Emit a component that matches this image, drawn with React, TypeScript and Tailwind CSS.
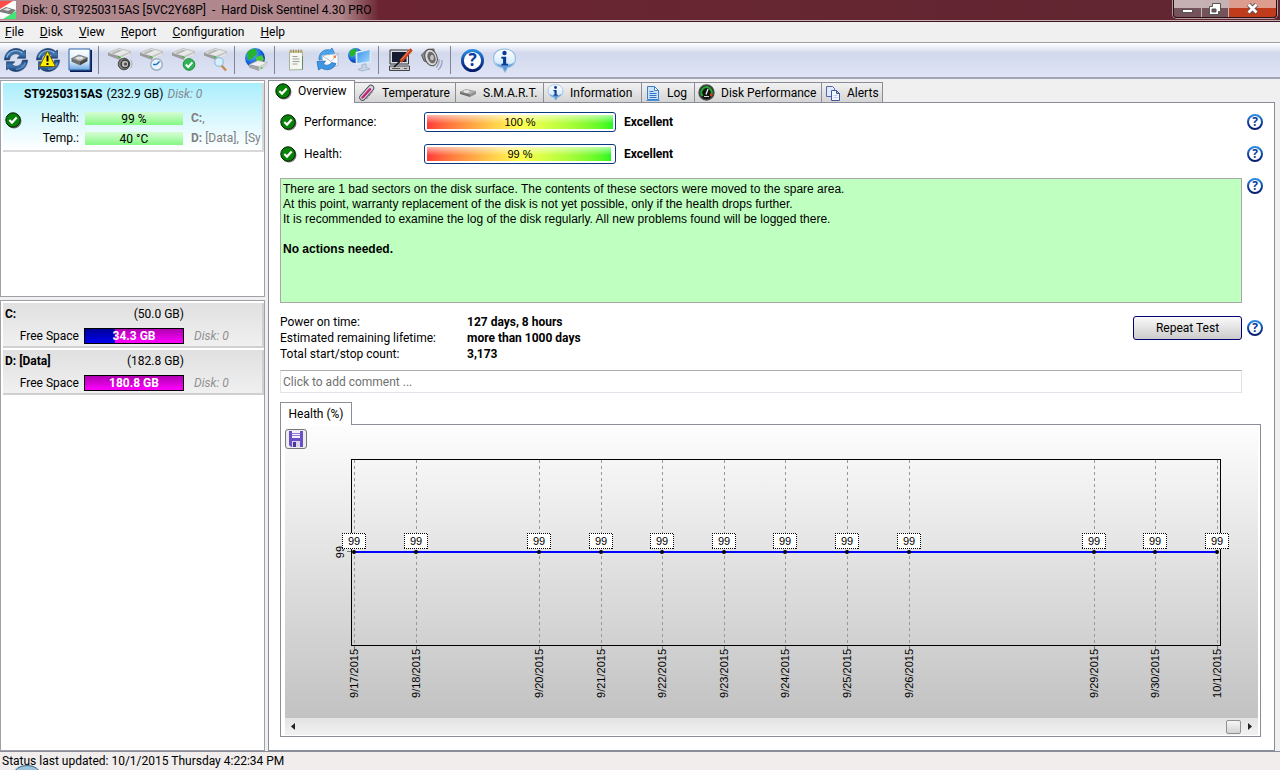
import { useState, type ReactNode } from 'react'

const MENU = ['File', 'Disk', 'View', 'Report', 'Configuration', 'Help']

const POINTS = [
  { x: 69, date: '9/17/2015' },
  { x: 131, date: '9/18/2015' },
  { x: 254, date: '9/20/2015' },
  { x: 316, date: '9/21/2015' },
  { x: 377, date: '9/22/2015' },
  { x: 439, date: '9/23/2015' },
  { x: 500, date: '9/24/2015' },
  { x: 562, date: '9/25/2015' },
  { x: 624, date: '9/26/2015' },
  { x: 809, date: '9/29/2015' },
  { x: 870, date: '9/30/2015' },
  { x: 932, date: '10/1/2015' },
]

// gradients shared by all the icons
function IconDefs() {
  return (
    <svg width="0" height="0" className="absolute" aria-hidden="true">
      <defs>
        <linearGradient id="ring" x1="0" y1="0" x2="0" y2="1">
          <stop offset="0" stopColor="#2b8be0" />
          <stop offset="0.5" stopColor="#1149a8" />
          <stop offset="1" stopColor="#061c6e" />
        </linearGradient>
        <linearGradient id="arrowBlue" x1="0" y1="0" x2="0" y2="1">
          <stop offset="0" stopColor="#1d4277" />
          <stop offset="0.5" stopColor="#3f78b4" />
          <stop offset="1" stopColor="#173a70" />
        </linearGradient>
        <linearGradient id="bubble" x1="0" y1="0" x2="0" y2="1">
          <stop offset="0" stopColor="#ffffff" />
          <stop offset="0.6" stopColor="#d9ecfb" />
          <stop offset="1" stopColor="#6ba6dc" />
        </linearGradient>
        <radialGradient id="globe" cx="0.35" cy="0.3" r="0.8">
          <stop offset="0" stopColor="#6cc4ff" />
          <stop offset="0.6" stopColor="#1261d8" />
          <stop offset="1" stopColor="#04287c" />
        </radialGradient>
        <linearGradient id="screen" x1="0" y1="0" x2="1" y2="1">
          <stop offset="0" stopColor="#2f8fee" />
          <stop offset="1" stopColor="#a9dcff" />
        </linearGradient>
      </defs>
    </svg>
  )
}

function HelpIcon({ size = 16 }: { size?: number }) {
  return (
    <svg width={size} height={size} viewBox="0 0 16 16" aria-hidden="true">
      <circle cx="8" cy="8" r="7" fill="#fff" stroke="url(#ring)" strokeWidth="2" />
      <text x="8" y="12" textAnchor="middle" fontSize="12" fontWeight="bold" fill="#0d3b9c" fontFamily="Open Sans, sans-serif">?</text>
    </svg>
  )
}

function CheckIcon() {
  return (
    <svg width="17" height="17" viewBox="0 0 17 17" aria-hidden="true">
      <circle cx="9" cy="9" r="7.5" fill="#777" />
      <circle cx="8" cy="8" r="7.2" fill="#068206" stroke="#001c00" />
      <path d="M4.300 8l2.700 2.600 4.700-5" fill="none" stroke="#fff" strokeWidth="2.200" />
    </svg>
  )
}

function InfoIcon({ size = 24 }: { size?: number }) {
  return (
    <svg width={size} height={size} viewBox="0 0 24 24" aria-hidden="true">
      <path d="M12 1c6.500 0 10.500 3.800 10.500 9 0 4.600-3 7.700-7.500 8.700L12.500 23 10 18.900C4.800 18 1.500 14.700 1.500 10 1.500 4.800 5.500 1 12 1z" fill="url(#bubble)" stroke="#8db8e0" />
      <path d="M3 13.500c3.500 4.300 14.500 4.300 18 0-1.200 3-3.800 4.600-6.500 5L12.500 22 10.500 18.500c-3.300-.5-6-2-7.500-5z" fill="#4a8fd2" opacity="0.800" />
      <circle cx="12" cy="4.800" r="2.100" fill="#0b3c94" />
      <path d="M9 8.500h4.600v6.500H15.500v1.700H9V15h1.600v-4.800H9z" fill="#0b3c94" />
    </svg>
  )
}

function SyncIcon({ warn = false }: { warn?: boolean }) {
  return (
    <svg width="26" height="26" viewBox="0 0 26 26" aria-hidden="true">
      <path d="M1.500 13C1.500 6.500 6.500 1.500 13 1.500c3 0 5.600 1 7.600 2.900L22.500 3v8.200h-8.300l2.700-2.600C15.800 7.400 14.500 6.800 13 6.800c-3.400 0-6 2.500-6.400 6z" fill="url(#arrowBlue)" stroke="#16325f" strokeWidth="0.600" />
      <path d="M24.500 13C24.500 19.500 19.500 24.500 13 24.500c-3 0-5.600-1-7.600-2.900L3.500 23v-8.200h8.300l-2.700 2.600c1.100 1.200 2.400 1.800 3.900 1.800 3.400 0 6-2.500 6.400-6z" fill="url(#arrowBlue)" stroke="#16325f" strokeWidth="0.600" />
      <path d="M3.800 10.500C5 6.500 8.700 3.600 13 3.600c2.500 0 4.700.9 6.500 2.500" fill="none" stroke="#8fb8de" strokeWidth="1.400" />
      <path d="M22.200 15.500c-1.200 4-4.900 6.900-9.200 6.900" fill="none" stroke="#5f93c8" strokeWidth="1.200" />
      {warn && (
        <>
          <path d="M12.500 4L20.500 19.500H4.500z" fill="#ffee00" stroke="#6d5f00" strokeWidth="1" strokeLinejoin="round" />
          <path d="M12.500 8.500v6M12.500 16v2" stroke="#000" strokeWidth="2" />
        </>
      )}
    </svg>
  )
}

function DriveBody() {
  return (
    <>
      <path d="M1 6L12 1.500 24 4.500 13 9.500z" fill="#e8e8e8" stroke="#a5a5a5" strokeWidth="0.600" />
      <path d="M4 6l8-3.300 3 .8-8 3.500z" fill="#b4b4b4" />
      <path d="M1 6l12 3.500V13L1 8.500z" fill="#9b9b9b" />
      <path d="M13 9.500l11-5v2.800L13 13z" fill="#c8c8c8" />
      <path d="M14 11.300l9-4.300" stroke="#fff" strokeWidth="0.800" />
      <path d="M11 9.500l3 1" stroke="#27c427" strokeWidth="1.200" />
    </>
  )
}

function DriveIcon({ kind }: { kind: 'sound' | 'clock' | 'check' | 'search' }) {
  return (
    <svg width="26" height="26" viewBox="0 0 26 26" aria-hidden="true">
      <DriveBody />
      {kind === 'sound' && (
        <>
          <circle cx="17" cy="17" r="5.800" fill="#7d7d7d" stroke="#4a4a4a" />
          <circle cx="18" cy="17" r="3.800" fill="#b9b9b9" stroke="#2e2e2e" strokeWidth="1.200" />
          <circle cx="18.500" cy="17" r="1.500" fill="#4a4a4a" />
          <path d="M23.500 12.500c2 2.500 2 6.500 0 9" fill="none" stroke="#aab" />
        </>
      )}
      {kind === 'clock' && (
        <>
          <circle cx="17.500" cy="17.500" r="5.800" fill="#e9f3fb" stroke="#9aaebf" strokeWidth="1.400" />
          <path d="M17.500 17.500l3-3M17.500 17.500h-3.500" stroke="#1a6fc0" strokeWidth="1.400" />
        </>
      )}
      {kind === 'check' && (
        <>
          <circle cx="18" cy="17.500" r="5.800" fill="#2fb457" stroke="#168a3a" />
          <path d="M14.800 17.500l2.400 2.500 4.200-4.600" fill="none" stroke="#fff" strokeWidth="1.900" />
        </>
      )}
      {kind === 'search' && (
        <>
          <path d="M18.500 18.500l4.500 5" stroke="#c98a4a" strokeWidth="2.400" />
          <circle cx="16" cy="15" r="4.300" fill="#d7effc" stroke="#8fbfe0" strokeWidth="1.200" />
        </>
      )}
    </svg>
  )
}

function DiskBoxIcon() {
  return (
    <svg width="24" height="24" viewBox="0 0 24 24" aria-hidden="true">
      <path d="M2 2h22v22H2z" fill="#0a1c52" />
      <path d="M1 1h21v21H1z" fill="url(#bubble)" stroke="#2c62ae" />
      <path d="M3.500 10.500L11 7l8.500 2.800-7.500 4z" fill="#a5a5a5" stroke="#555" strokeWidth="0.600" />
      <path d="M3.500 10.500l8.500 3.300v3.400l-8.500-3.500z" fill="#6c6c6c" />
      <path d="M12 13.800l7.500-4v3.400l-7.500 4z" fill="#484848" />
      <ellipse cx="11.500" cy="10.200" rx="3.500" ry="1.400" fill="#e4e4e4" />
    </svg>
  )
}

function Globe({ cx, cy, r }: { cx: number; cy: number; r: number }) {
  return (
    <>
      <circle cx={cx} cy={cy} r={r} fill="url(#globe)" />
      <path
        d={`M${cx - r * 0.8} ${cy - r * 0.5}q${r * 0.4} ${-r * 0.5} ${r * 0.9} ${-r * 0.4}l${r * 0.1} ${r * 0.5}l${-r * 0.5} ${r * 0.5}l${-r * 0.4} ${r * 0.1}z`}
        fill="#27b32b"
      />
      <path
        d={`M${cx + r * 0.1} ${cy - r * 0.1}l${r * 0.6} ${-r * 0.2}l${r * 0.2} ${r * 0.4}l${-r * 0.4} ${r * 0.7}l${-r * 0.4} ${-r * 0.3}z`}
        fill="#49c83c"
      />
    </>
  )
}

function GlobeDriveIcon() {
  return (
    <svg width="26" height="26" viewBox="0 0 26 26" aria-hidden="true">
      <Globe cx={12} cy={11} r={10} />
      <path d="M6 17.500l9-4 9.500 2-8.500 4.500z" fill="#f0f0f0" stroke="#9b9b9b" strokeWidth="0.600" />
      <path d="M6 17.500l10 2.500v4L6 20.500z" fill="#a4a4a4" />
      <path d="M16 20l8.500-4.500v3.500L16 24z" fill="#d4d4d4" />
      <path d="M17.500 21.500l2-1" stroke="#27c427" strokeWidth="1.200" />
    </svg>
  )
}

function NotepadIcon() {
  return (
    <svg width="24" height="24" viewBox="0 0 24 24" aria-hidden="true">
      <path d="M5.500 3.500h13v18l-13 .5z" fill="#f6f7f0" stroke="#a8b0a4" />
      <path d="M5 2.500h14v2H5z" fill="#c9bf86" />
      <path d="M7 1.500v3.500M9.500 1.500v3.500M12 1.500v3.500M14.500 1.500v3.500M17 1.500v3.500" stroke="#857a48" strokeWidth="0.800" />
      <path d="M8.500 8.500h5M8.500 11h7M8.500 13.500h7M8.500 16h5" stroke="#98a0a0" />
      <path d="M18.500 8v13.500" stroke="#5c8a5a" />
    </svg>
  )
}

function MailSyncIcon() {
  return (
    <svg width="26" height="26" viewBox="0 0 26 26" aria-hidden="true">
      <path d="M4 13C3.500 6 9 1.500 15 3l2-2 3.500 7.500-8.500 1 2-2.500C10.500 6.500 8 9 8 12z" fill="#4aa5ec" stroke="#2272bd" strokeWidth="0.700" />
      <path d="M7 8.500l16-2v12L8 21z" fill="#fbfcff" stroke="#a7b4c8" strokeWidth="0.800" />
      <path d="M7 8.500l9 6 7-8" fill="none" stroke="#a7b4c8" strokeWidth="0.800" />
      <path d="M18.500 8.500h2.500v2.500h-2.500z" fill="#e6814c" />
      <path d="M2 14.500l8.500-.5-2 3c2.500 2 6.500 1.500 8-1.500l4.500 1c-2 6-9.500 8-14.500 4.500L3.500 23z" fill="#3f97e4" stroke="#1d69b4" strokeWidth="0.700" />
    </svg>
  )
}

function NetworkIcon() {
  return (
    <svg width="26" height="26" viewBox="0 0 26 26" aria-hidden="true">
      <Globe cx={8.500} cy={8.500} r={7.500} />
      <path d="M9.500 5.500l14-3.500v13l-14 2z" fill="url(#screen)" stroke="#dfeaf4" strokeWidth="1.600" />
      <path d="M15 17.500l4-.8v3.300l4 2-8 2-4-1.500 4-2z" fill="#c6d3e2" stroke="#8ca3bc" strokeWidth="0.600" />
    </svg>
  )
}

function PcToolIcon() {
  return (
    <svg width="26" height="26" viewBox="0 0 26 26" aria-hidden="true">
      <path d="M3 3h18.500v14H3z" fill="#dcdce4" stroke="#333" />
      <path d="M5 5h14.500v10H5z" fill="#141c34" />
      <path d="M2.500 19h20v4.500h-20z" fill="#c9c9c9" stroke="#444" />
      <path d="M5 21.500h8M17 21.500h3" stroke="#555" />
      <path d="M7 20l8.500-8" stroke="#111" strokeWidth="1.600" />
      <path d="M14.500 13.500L23.500 3.500" stroke="#c6431e" strokeWidth="3.600" strokeLinecap="round" />
      <path d="M14.500 12.500L22.500 3.500" stroke="#f5986a" strokeWidth="1" />
    </svg>
  )
}

function SpeakerIcon() {
  return (
    <svg width="26" height="26" viewBox="0 0 26 26" aria-hidden="true">
      <path d="M2.500 8L8 2.500l7-.5v15.500L5 14z" fill="#8b8b8b" stroke="#5d5d5d" />
      <ellipse cx="12" cy="10.500" rx="6" ry="8.500" transform="rotate(-20 12 10.500)" fill="#dadada" stroke="#4d4d4d" />
      <ellipse cx="12.500" cy="10.500" rx="3.800" ry="6" transform="rotate(-20 12.500 10.500)" fill="#6b6b6b" />
      <ellipse cx="13" cy="10.500" rx="1.800" ry="2.800" fill="#c6c6c6" />
      <path d="M20 12c.5 3.500-.5 6-3 8.500M23 13c.3 4-1 7.500-4 10" fill="none" stroke="#9aa2bd" strokeWidth="1.300" />
    </svg>
  )
}

function ThermoIcon() {
  return (
    <svg width="18" height="18" viewBox="0 0 18 18" className="shrink-0" aria-hidden="true">
      <path d="M4.500 13.500L13 4" stroke="#4f4f58" strokeWidth="6.500" strokeLinecap="round" />
      <path d="M4.500 13.500L13 4" stroke="#d9d3dc" strokeWidth="4.800" strokeLinecap="round" />
      <path d="M4.500 13.500L12 5.200" stroke="#c3207c" strokeWidth="2.400" strokeLinecap="round" />
      <path d="M8.500 15l6-7" stroke="#5e5e66" strokeDasharray="1 1" />
    </svg>
  )
}

function SmallDriveIcon() {
  return (
    <svg width="18" height="14" viewBox="0 0 18 14" aria-hidden="true">
      <path d="M1 6l6-2.500 10 2-6 3z" fill="#b5b5b5" stroke="#777" strokeWidth="0.500" />
      <path d="M1 6l10 2.500V11L1 8z" fill="#6f6f6f" />
      <path d="M11 8.500l6-3v2.500l-6 3z" fill="#8e8e8e" />
      <ellipse cx="7.500" cy="5.500" rx="3" ry="1.200" fill="#ececec" />
    </svg>
  )
}

function LogIcon() {
  return (
    <svg width="16" height="16" viewBox="0 0 16 16" aria-hidden="true">
      <path d="M2.500 1.500h7l4 4v9h-11z" fill="#c9e3fb" stroke="#3c7fcb" />
      <path d="M9.500 1.500v4h4z" fill="#fff" stroke="#3c7fcb" />
      <path d="M4.500 6.500h4M4.500 8.500h7M4.500 10.500h7M4.500 12.500h7" stroke="#2f74c4" />
      <path d="M1.500 15.500h13" stroke="#4a8fd8" />
    </svg>
  )
}

function GaugeIcon() {
  return (
    <svg width="17" height="17" viewBox="0 0 17 17" aria-hidden="true">
      <circle cx="8.500" cy="8.500" r="7.500" fill="#0f1710" stroke="#4a4a4a" strokeWidth="1.400" />
      <path d="M4.500 12A5.300 5.300 0 1 1 12.500 12" fill="none" stroke="#25a832" strokeWidth="2.200" />
      <path d="M12.500 12a5.300 5.300 0 0 0 1.200-2.500" fill="none" stroke="#e03020" strokeWidth="2" />
      <path d="M8 10.500l2-5.500" stroke="#fff" strokeWidth="1.200" />
      <path d="M6 12.500h5" stroke="#d8d8d8" />
    </svg>
  )
}

function AlertsIcon() {
  return (
    <svg width="16" height="16" viewBox="0 0 16 16" aria-hidden="true">
      <path d="M1.500 1.500h6l2 2v8h-8z" fill="#dfe9fb" stroke="#5468a8" />
      <path d="M6.500 5.500h5l3 3v7h-8z" fill="#f2f7ff" stroke="#43589c" />
      <path d="M11.500 5.500v3h3z" fill="#a8c0ea" stroke="#43589c" />
      <path d="M8.500 10.500h4M8.500 12.500h4" stroke="#b4caee" />
    </svg>
  )
}

function DisketteIcon() {
  return (
    <svg width="16" height="16" viewBox="0 0 16 16" aria-hidden="true">
      <path d="M1 0h14v16H3l-2-2z" fill="#6a50c4" />
      <path d="M4 0h8v7H4z" fill="#f3f0fc" />
      <path d="M4 2.500h8M4 4.500h8" stroke="#8f7fd2" />
      <path d="M4 10h8v6H4z" fill="#d8d3ee" />
      <path d="M5 11h3v5H5z" fill="#4a34a0" />
    </svg>
  )
}

function AppIcon() {
  return (
    <svg width="16" height="18" viewBox="0 0 16 18" aria-hidden="true">
      <path d="M0 0h16v18H0z" fill="#fff" />
      <path d="M0 0h13L0 8z" fill="#ff2a2a" opacity="0.850" />
      <path d="M16 18H3l13-8z" fill="#1fe05a" opacity="0.850" />
      <path d="M0 9l6-3 10 3-5 4.500L0 11z" fill="#7b7b7b" />
      <path d="M3 8.500l4-1.500 4 1.500-3 1.500z" fill="#e0e0e0" />
    </svg>
  )
}

const TOOLBAR: { label: string; icon: ReactNode; sep?: boolean }[] = [
  { label: 'Refresh', icon: <SyncIcon /> },
  { label: 'Refresh with warning', icon: <SyncIcon warn /> },
  { label: 'Disk details', icon: <DiskBoxIcon />, sep: true },
  { label: 'Acoustic settings', icon: <DriveIcon kind="sound" /> },
  { label: 'Short self test', icon: <DriveIcon kind="clock" /> },
  { label: 'Extended self test', icon: <DriveIcon kind="check" /> },
  { label: 'Surface test', icon: <DriveIcon kind="search" />, sep: true },
  { label: 'Online disk info', icon: <GlobeDriveIcon />, sep: true },
  { label: 'Save report', icon: <NotepadIcon /> },
  { label: 'Send report', icon: <MailSyncIcon /> },
  { label: 'Network report', icon: <NetworkIcon />, sep: true },
  { label: 'Configuration', icon: <PcToolIcon /> },
  { label: 'Sound alerts', icon: <SpeakerIcon />, sep: true },
  { label: 'Help', icon: <HelpIcon size={23} /> },
  { label: 'About', icon: <InfoIcon size={25} /> },
]

const TABS: { label: string; icon: ReactNode; width: string }[] = [
  { label: 'Overview', icon: <CheckIcon />, width: 'w-[87px]' },
  { label: 'Temperature', icon: <ThermoIcon />, width: 'w-[101px]' },
  { label: 'S.M.A.R.T.', icon: <SmallDriveIcon />, width: 'w-[88px]' },
  { label: 'Information', icon: <InfoIcon size={17} />, width: 'w-[98px]' },
  { label: 'Log', icon: <LogIcon />, width: 'w-[53px]' },
  { label: 'Disk Performance', icon: <GaugeIcon />, width: 'w-[127px]' },
  { label: 'Alerts', icon: <AlertsIcon />, width: 'w-[61px]' },
]

function TitleBar() {
  return (
    <header className="flex h-[22px] items-start justify-between border-b border-[#3d1620] bg-linear-to-r from-[#8a4d58] via-[#6b2532] via-30% to-[#5f2631] shadow-[inset_0_-1px_0_#c9b0b4]">
      <div className="flex h-5 items-center gap-[6px] bg-linear-to-r from-[#b08a90] via-[#b0868c] via-90% to-transparent pr-2">
        <AppIcon />
        <h1 className="whitespace-pre">Disk: 0, ST9250315AS [5VC2Y68P]  -  Hard Disk Sentinel 4.30 PRO</h1>
      </div>
      <div className="mr-[3px] flex h-[18px] overflow-hidden rounded-b border border-t-0 border-[#2b0f16] text-white shadow-[0_0_0_1px_#b39a9e]">
        <button aria-label="Minimize" className="flex w-7 items-center justify-center border-r border-[#c9b4b8] bg-linear-to-b from-[#c5b1b4] from-45% to-[#74535a] to-50% pt-1">
          <span className="h-1 w-[11px] border border-[#555] bg-white" />
        </button>
        <button aria-label="Restore" className="flex w-[27px] items-center justify-center border-r border-[#c9b4b8] bg-linear-to-b from-[#c5b1b4] from-45% to-[#74535a] to-50%">
          <svg width="12" height="12" viewBox="0 0 12 12">
            <path d="M3.500.5h8v8h-2v3h-9v-8h3z" fill="#fff" stroke="#555" />
            <path d="M3 6h4v3H3z" fill="#74535a" stroke="#555" />
          </svg>
        </button>
        <button aria-label="Close" className="flex w-[47px] items-center justify-center bg-linear-to-b from-[#dc9c8e] from-45% to-[#c03a1c] to-50%">
          <svg width="13" height="11" viewBox="0 0 13 11">
            <path d="M2.500 1.500l8 8M10.500 1.500l-8 8" stroke="#5a4a50" strokeWidth="4.500" />
            <path d="M2.500 1.500l8 8M10.500 1.500l-8 8" stroke="#fff" strokeWidth="2.800" />
          </svg>
        </button>
      </div>
    </header>
  )
}

function DiskCard() {
  return (
    <div className="m-[2px] mr-0 h-[69px] border-r-2 border-b-2 border-[#d8d8d8] bg-linear-to-b from-[#a9eefc] to-white">
      <div className="flex h-[22px] items-center gap-1 pl-[21px] whitespace-nowrap">
        <b>ST9250315AS</b>
        <span>(232.9 GB)</span>
        <i className="text-[#808890]">Disk: 0</i>
      </div>
      <div className="grid grid-cols-[20px_56px_98px_1fr] items-center pt-[3px]">
        <div className="row-span-2 self-start pt-1 pl-[2px]"><CheckIcon /></div>
        <span className="text-right leading-5">Health:</span>
        <div className="ml-[6px] h-[13px] w-[98px] bg-linear-to-b from-[#d6fcd6] to-[#82f882] text-center leading-[15px]">99 %</div>
        <span className="pl-[14px] text-[#808080]"><b>C:</b>,</span>
        <span className="text-right leading-5">Temp.:</span>
        <div className="ml-[6px] h-[13px] w-[98px] bg-linear-to-b from-[#d6fcd6] to-[#82f882] text-center leading-[15px]">40 °C</div>
        <span className="pl-[14px] whitespace-pre text-[#808080]"><b>D:</b> [Data],  [Sy</span>
      </div>
    </div>
  )
}

function VolumeCard({ name, size, free, used }: { name: string; size: string; free: string; used: number }) {
  return (
    <div className="mb-[2px] h-[45px] border-r-2 border-b-2 border-[#d0d0d0] bg-linear-to-b from-[#e0e0e0] to-[#f0f0f0]">
      <div className="flex h-[22px] w-[181px] items-center justify-between pl-[2px]">
        <b>{name}</b>
        <span>({size})</span>
      </div>
      <div className="flex h-[21px] items-center">
        <span className="w-[76px] text-right">Free Space</span>
        <div className="relative ml-[5px] h-4 w-[100px] overflow-hidden border border-black bg-linear-to-b from-[#b000b0] to-[#ff00ff]">
          <div className="absolute inset-y-0 left-0 bg-linear-to-b from-[#000098] to-[#0000f0]" style={{ width: `${used}%` }} />
          <b className="relative block text-center leading-[15px] text-white">{free}</b>
        </div>
        <i className="ml-[10px] text-[#909090]">Disk: 0</i>
      </div>
    </div>
  )
}

function ScoreRow({ label, value }: { label: string; value: number }) {
  return (
    <div className="flex h-8 items-center">
      <CheckIcon />
      <span className="ml-[7px] w-[120px]">{label}:</span>
      <div role="progressbar" aria-label={label} aria-valuenow={value} className="relative h-5 w-48 rounded-[3px] border border-[#0a3a7c] bg-white p-[2px]">
        <div className="h-full" style={{ width: `${value}%` }}>
          <div className="relative h-full bg-linear-to-r from-[#ff3838] via-[#ffff50] to-[#20f820]">
            <div className="absolute inset-0 bg-linear-to-b from-white/60 to-transparent to-60%" />
          </div>
        </div>
        <span className="absolute inset-0 text-center font-['Liberation_Sans',sans-serif] text-[11px] leading-[18px]">{value} %</span>
      </div>
      <b className="ml-2">Excellent</b>
      <button aria-label={`${label} help`} className="ml-auto"><HelpIcon /></button>
    </div>
  )
}

function HealthChart() {
  return (
    <svg viewBox="0 0 973 292" className="block w-full font-['Liberation_Sans',sans-serif] text-[11px]">
      <defs>
        <linearGradient id="chartBg" x1="0" y1="0" x2="0" y2="1">
          <stop offset="0" stopColor="#fdfdfd" />
          <stop offset="1" stopColor="#c2c2c2" />
        </linearGradient>
      </defs>
      <rect width="973" height="292" fill="url(#chartBg)" />
      <rect x="66.500" y="33.500" width="869" height="186" fill="none" stroke="#000" />
      {POINTS.map(p => (
        <g key={p.date}>
          <path d={`M${p.x + 0.5} 34v185`} stroke="#999" strokeDasharray="3 3" />
          <path d={`M${p.x + 0.5} 220v4`} stroke="#777" />
          <text transform={`translate(${p.x + 4} 223) rotate(-90)`} textAnchor="end">{p.date}</text>
        </g>
      ))}
      <path d="M62 125.500h4" stroke="#777" />
      <text transform="translate(59 126) rotate(-90)" textAnchor="middle">99</text>
      <path d="M69 126h863" stroke="#0000ff" strokeWidth="2" />
      {POINTS.map(p => (
        <g key={p.date}>
          <circle cx={p.x} cy="126" r="2" fill="#000" />
          <rect x={p.x - 12} y="107" width="24" height="16" fill="#fff" />
          <path
            d={`M${p.x - 12} 107.500h24M${p.x - 12} 122.500h24M${p.x - 11.5} 107v16M${p.x + 11.5} 108v16`}
            stroke="#000"
            strokeDasharray="1 1"
            shapeRendering="crispEdges"
          />
          <text x={p.x} y="119" textAnchor="middle">99</text>
        </g>
      ))}
    </svg>
  )
}

export default function App() {
  const [tab, setTab] = useState('Overview')
  const [comment, setComment] = useState('')

  return (
    <div className="flex min-h-screen flex-col overflow-hidden bg-[#f0f0f0] font-[Roboto,'Open_Sans',sans-serif] text-[12px] leading-4 text-black">
      <IconDefs />
      <TitleBar />

      <nav className="flex h-5 items-center gap-4 pl-[5px]">
        {MENU.map(m => (
          <button key={m}><u>{m[0]}</u>{m.slice(1)}</button>
        ))}
      </nav>

      <div className="flex h-[37px] items-center border-t border-b-2 border-t-[#a0a0a0] border-b-[#a0a4b4] bg-linear-to-b from-white via-[#d2d9ec] via-30% to-[#dfe4f6]">
        {TOOLBAR.map(t => (
          <div key={t.label} className="flex items-center">
            <button aria-label={t.label} className="flex size-8 items-center justify-center">{t.icon}</button>
            {t.sep && <span className="mr-[5px] ml-[2px] h-7 w-px bg-[#808494]" />}
          </div>
        ))}
      </div>

      <div className="flex grow pt-px">
        <aside className="flex w-[265px] shrink-0 flex-col gap-[3px]">
          <div className="h-[217px] border border-[#a0a0a8] bg-white">
            <DiskCard />
          </div>
          <div className="grow border border-[#a0a0a8] bg-white p-[2px] pr-0">
            <VolumeCard name="C:" size="50.0 GB" free="34.3 GB" used={31} />
            <VolumeCard name="D: [Data]" size="182.8 GB" free="180.8 GB" used={0} />
          </div>
        </aside>

        <main className="mr-[5px] ml-[3px] flex min-w-0 grow flex-col">
          <div role="tablist" className="relative z-10 flex h-[23px] items-end">
            {TABS.map(t => (
              <button
                key={t.label}
                role="tab"
                aria-selected={tab === t.label}
                onClick={() => setTab(t.label)}
                className={
                  tab === t.label
                    ? `${t.width} flex h-[23px] shrink-0 items-center gap-[6px] border border-b-0 border-[#8a8c98] bg-white pb-[2px] pl-[6px] whitespace-nowrap`
                    : `${t.width} flex h-[21px] shrink-0 items-center gap-[6px] border border-l-0 border-[#8a8c98] bg-linear-to-b from-[#f2f2f2] to-[#d4d4d4] pl-[3px] whitespace-nowrap`
                }
              >
                {t.icon}
                {t.label}
              </button>
            ))}
          </div>

          <section className="-mt-px flex grow flex-col border border-[#8a8c98] bg-white pt-[3px] pr-[11px] pb-[13px] pl-[11px]">
            <ScoreRow label="Performance" value={100} />
            <ScoreRow label="Health" value={99} />

            <div className="mt-2 flex items-start gap-[5px]">
              <div className="h-[125px] grow border border-[#a8a8a8] bg-[#bfffbf] px-[2px] pt-[3px] font-['Liberation_Sans',sans-serif] leading-[15px]">
                <p>There are 1 bad sectors on the disk surface. The contents of these sectors were moved to the spare area.</p>
                <p>At this point, warranty replacement of the disk is not yet possible, only if the health drops further.</p>
                <p>It is recommended to examine the log of the disk regularly. All new problems found will be logged there.</p>
                <p className="mt-[15px] font-bold">No actions needed.</p>
              </div>
              <button aria-label="Status help"><HelpIcon /></button>
            </div>

            <div className="mt-[11px] flex items-center justify-between">
              <dl className="grid grid-cols-[187px_1fr]">
                <dt>Power on time:</dt>
                <dd className="font-bold">127 days, 8 hours</dd>
                <dt>Estimated remaining lifetime:</dt>
                <dd className="font-bold">more than 1000 days</dd>
                <dt>Total start/stop count:</dt>
                <dd className="font-bold">3,173</dd>
              </dl>
              <div className="mb-5 flex items-center gap-[5px]">
                <button className="h-6 w-[109px] rounded-[3px] border border-[#000070] bg-linear-to-b from-[#fafafa] to-[#cccccc]">Repeat Test</button>
                <button aria-label="Repeat test help"><HelpIcon /></button>
              </div>
            </div>

            <input
              type="text"
              aria-label="Comment"
              placeholder="Click to add comment ..."
              value={comment}
              onChange={e => setComment(e.target.value)}
              className="mt-2 mr-[21px] h-[23px] border border-[#e2e3ea] border-t-[#abadb3] px-[2px] placeholder:text-[#707070] focus:outline-none"
            />

            <div className="relative z-10 mt-[9px] flex">
              <button role="tab" aria-selected="true" className="h-[23px] w-[72px] border border-b-0 border-[#8a8c98] bg-white whitespace-nowrap">Health (%)</button>
            </div>
            <div className="relative -mt-px mr-[2px] border border-[#8a8c98] bg-white pt-px pr-[2px] pb-px pl-1">
              <HealthChart />
              <button aria-label="Save chart" className="absolute top-1 left-1 flex h-5 w-[22px] items-center justify-center rounded-[3px] border border-[#777] bg-[#ececec]">
                <DisketteIcon />
              </button>
              <div className="flex h-[17px] items-center bg-linear-to-b from-[#e3e3e3] to-[#f2f2f2]">
                <button aria-label="Scroll left" className="flex w-[15px] justify-center">
                  <svg width="4" height="7" viewBox="0 0 4 7"><path d="M4 0v7L0 3.500z" fill="#222" /></svg>
                </button>
                <div className="flex grow justify-end">
                  <div className="h-[14px] w-[15px] rounded-xs border border-[#8f8f8f] bg-linear-to-b from-[#f6f6f6] to-[#d4d4d4]" />
                </div>
                <button aria-label="Scroll right" className="flex w-[17px] justify-center">
                  <svg width="4" height="7" viewBox="0 0 4 7"><path d="M0 0v7l4-3.500z" fill="#222" /></svg>
                </button>
              </div>
            </div>
          </section>
        </main>
      </div>

      <footer className="relative flex h-[19px] items-center border-t border-[#8a8c98] bg-[#f1eded] pl-[2px]">
        <svg width="26" height="5" viewBox="0 0 26 5" className="absolute bottom-0 left-[14px]" aria-hidden="true">
          <ellipse cx="13" cy="9" rx="13" ry="8.500" fill="#9cc3dc" stroke="#3c6484" />
        </svg>
        <span className="relative">Status last updated: 10/1/2015 Thursday 4:22:34 PM</span>
      </footer>
    </div>
  )
}
